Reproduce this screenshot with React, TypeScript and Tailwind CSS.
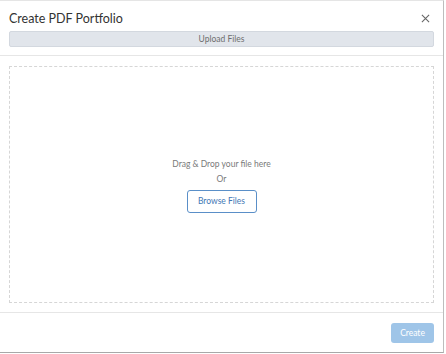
export default function App() {
  return (
    <div className="w-[446px] h-[354px] bg-white" style={{ fontFamily: "Lato, 'Open Sans', sans-serif" }}>
      <div className="w-[444px] h-[353px] border-t border-r border-b border-t-[#e5e5e5] border-r-[#bdbdbd] border-b-[#a8a8a8] flex flex-col">
        {/* Header */}
        <div className="px-[9px] pt-[9px] pb-[8px] border-b border-[#e6e6e6]">
          <div className="flex items-center justify-between h-[18px]">
            <h2 className="text-[12.5px] text-[#333] leading-none">Create PDF Portfolio</h2>
            <svg width="9" height="9" viewBox="0 0 10 10" className="mr-[4px] -mt-[2px]" stroke="#666" strokeWidth="1.2">
              <path d="M1 1l8 8M9 1l-8 8" />
            </svg>
          </div>
          <div className="mt-[3px] h-[16px] rounded-[2px] bg-[#e1e5eb] border border-[#d3d8df] flex items-center justify-center text-[8.5px] text-[#6e6e6e]">
            Upload Files
          </div>
        </div>
        {/* Body */}
        <div className="flex-1 px-[9px] pt-[10px] pb-[9px] border-b border-[#e6e6e6]">
          <div className="h-full border border-dashed border-[#d6d6d6] flex flex-col items-center justify-center">
            <p className="text-[8.5px] text-[#7a7a7a] leading-none mt-[3px]">Drag &amp; Drop your file here</p>
            <p className="text-[8.5px] text-[#7a7a7a] leading-none mt-[7px]">Or</p>
            <button className="mt-[6px] w-[70px] h-[23px] rounded-[3px] border border-[#5a8fc8] text-[#3f77b5] text-[8.5px] bg-white">
              Browse Files
            </button>
          </div>
        </div>
        {/* Footer */}
        <div className="h-[39px] flex items-center justify-end px-[9px] pt-[1px]">
          <button className="w-[43px] h-[20px] rounded-[3px] bg-[#9fc5e8] text-white text-[8.5px]">
            Create
          </button>
        </div>
      </div>
    </div>
  );
}
